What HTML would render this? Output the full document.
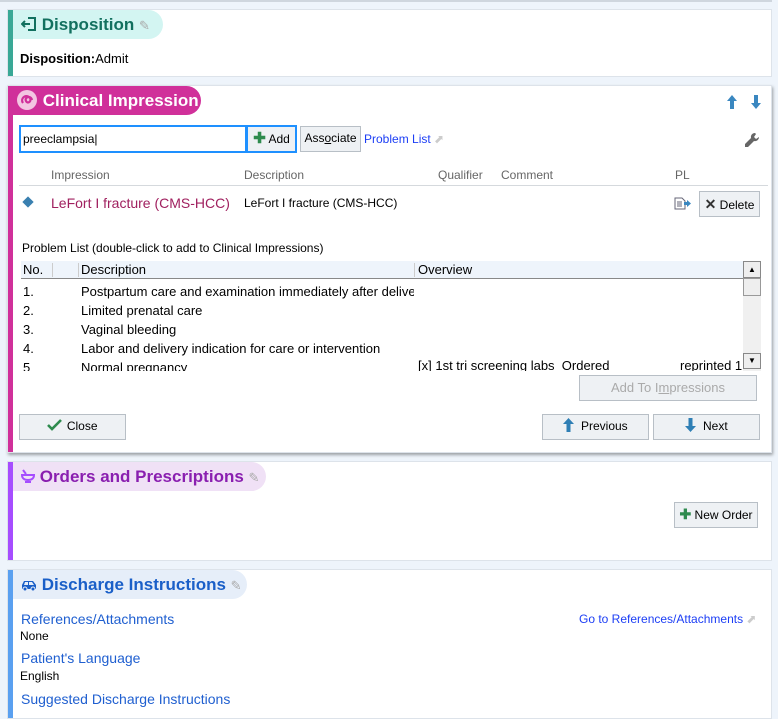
<!DOCTYPE html>
<html><head><meta charset="utf-8"><style>
*{box-sizing:border-box;margin:0;padding:0}
body{width:778px;height:713px;background:#eef4fb;font-family:"Liberation Sans",Arial,sans-serif;font-size:12px;color:#000;position:relative;overflow:hidden}
.a{position:absolute}
.panel{position:absolute;background:#fff;border:1px solid #dde3ea}
.bar{position:absolute;left:0;top:0;bottom:0;width:5px}
.pill{position:absolute;left:5px;top:0;height:29px;border-radius:0 15px 15px 0;font-size:17px;padding-left:8px;line-height:29px;white-space:nowrap;font-weight:bold}
.btn{position:absolute;background:#eef1f4;border:1px solid #b8bfc6;font-size:12px;text-align:center;line-height:23px;color:#000}
.link{color:#1f5fd0;font-size:14px}
.pen{color:#aaa;font-size:13px;font-weight:normal}
svg{display:inline-block}
</style></head><body>
<div class="a" style="left:0;top:0;width:772px;height:2px;background:#cfd6de"></div>

<div class="panel" style="left:7px;top:9px;width:765px;height:68px">
 <div class="bar" style="background:#3aa896"></div>
 <div class="pill" style="background:#d3f5f2;color:#12705f;width:150px">
  <svg width="16" height="16" viewBox="0 0 16 16" style="vertical-align:-2px"><path d="M7 2h7v12H7" fill="none" stroke="#12705f" stroke-width="2"/><path d="M1 8h8M4 5L1 8l3 3" fill="none" stroke="#12705f" stroke-width="2"/></svg>
  Disposition <span class="pen">✎</span></div>
 <div class="a" style="left:12px;top:41px;font-size:13px"><b>Disposition:</b>Admit</div>
</div>

<div class="panel" style="left:7px;top:85px;width:765px;height:368px;box-shadow:1px 2px 3px rgba(0,0,0,.35)">
 <div class="bar" style="background:#d0309a"></div>
 <div class="pill" style="left:0;background:#d0309a;color:#fff;width:193px;top:0;padding-left:8px">
  <svg width="22" height="22" viewBox="0 0 22 22" style="vertical-align:-5px"><circle cx="11" cy="11" r="10" fill="#f3c6e2"/><path d="M7 14c-3-4 2-9 6-6s-1 8-3 4 5-6 6-1" fill="none" stroke="#d0309a" stroke-width="2.2"/></svg>
  Clinical Impression</div>
 <svg class="a" style="left:719px;top:9px" width="34" height="14" viewBox="0 0 34 14"><path d="M5 0L0 6h3v8h4V6h3z" fill="#3a87c0"/><path d="M29 14l5-6h-3V0h-4v8h-3z" fill="#3a87c0"/></svg>
 <svg class="a" style="left:736px;top:46px" width="16" height="16" viewBox="0 0 16 16"><path d="M11 1a4 4 0 0 0-4 5L1 12v3h3l6-6a4 4 0 0 0 5-4l-3 2-2-2 2-3z" fill="#666"/></svg>
 <div class="a" style="left:11px;top:39px;width:228px;height:28px;border:2px solid #1e90ff;background:#fff;padding:5px 2px;font-size:12px">preeclampsia|</div>
 <div class="btn" style="left:239px;top:39px;width:50px;height:28px;border:2px solid #1e90ff;border-left:1px solid #1e90ff;line-height:24px"><b style="color:#2e8b4e;font-size:15px">✚</b> Add</div>
 <div class="btn" style="left:292px;top:40px;width:61px;height:26px">Ass<u>o</u>ciate</div>
 <div class="a" style="left:356px;top:46px;color:#1c3ef5;font-size:12px">Problem List <span style="color:#ccc">⬈</span></div>
 <div class="a" style="left:43px;top:82px;color:#666">Impression</div>
 <div class="a" style="left:236px;top:82px;color:#666">Description</div>
 <div class="a" style="left:430px;top:82px;color:#666">Qualifier</div>
 <div class="a" style="left:493px;top:82px;color:#666">Comment</div>
 <div class="a" style="left:667px;top:82px;color:#666">PL</div>
 <div class="a" style="left:11px;top:99px;width:749px;height:1px;background:#d5d9dd"></div>
 <div class="a" style="left:16px;top:112px;width:8px;height:8px;background:#3a80b0;transform:rotate(45deg)"></div>
 <div class="a" style="left:43px;top:109px;color:#a0205f;font-size:14px">LeFort I fracture (CMS-HCC)</div>
 <div class="a" style="left:236px;top:110px">LeFort I fracture (CMS-HCC)</div>
 <svg class="a" style="left:666px;top:111px" width="17" height="13" viewBox="0 0 17 13"><path d="M1 1h7l3 3v8H1z" fill="#fff" stroke="#667"/><path d="M3 5h5M3 7h5M3 9h5" stroke="#667"/><path d="M10 5h3V3l4 3.5-4 3.5V8h-3z" fill="#3a87c0"/></svg>
 <div class="btn" style="left:691px;top:105px;width:61px;height:26px;line-height:24px"><b style="font-size:14px;color:#333">✕</b> Delete</div>
 <div class="a" style="left:14px;top:155px">Problem List (double-click to add to Clinical Impressions)</div>
 <div class="a" style="left:13px;top:175px;width:740px;height:110px;overflow:hidden;font-size:13px">
  <div class="a" style="left:0;top:0;width:722px;height:18px;background:#eef4fb;border-bottom:1px solid #888"></div>
  <div class="a" style="left:2px;top:1px">No.</div>
  <div class="a" style="left:31px;top:2px;width:1px;height:14px;background:#ccc"></div>
  <div class="a" style="left:57px;top:2px;width:1px;height:14px;background:#ccc"></div>
  <div class="a" style="left:60px;top:1px">Description</div>
  <div class="a" style="left:393px;top:2px;width:1px;height:14px;background:#ccc"></div>
  <div class="a" style="left:397px;top:1px">Overview</div>
  <div class="a" style="left:2px;top:21px;line-height:19px">1.<br>2.<br>3.<br>4.<br>5</div>
  <div class="a" style="left:60px;top:21px;line-height:19px;width:333px;overflow:hidden;white-space:nowrap">Postpartum care and examination immediately after delivery<br>Limited prenatal care<br>Vaginal bleeding<br>Labor and delivery indication for care or intervention<br>Normal pregnancy</div>
  <div class="a" style="left:397px;top:97px;white-space:nowrap">[x] 1st tri screening labs&nbsp; Ordered</div>
  <div class="a" style="left:659px;top:97px;white-space:nowrap">reprinted 1</div>
  <div class="a" style="left:722px;top:0;width:18px;height:110px;background:#f0f0f0"></div>
  <div class="a" style="left:722px;top:0;width:18px;height:17px;background:#eee;border:1px solid #888;font-size:8px;text-align:center;line-height:15px">▲</div>
  <div class="a" style="left:722px;top:17px;width:18px;height:18px;background:#eee;border:1px solid #999"></div>
  <div class="a" style="left:722px;top:92px;width:18px;height:16px;background:#eee;border:1px solid #888;font-size:8px;text-align:center;line-height:14px">▼</div>
 </div>
 <div class="btn" style="left:571px;top:289px;width:178px;height:26px;color:#aaa;font-size:13px">Add To I<u>m</u>pressions</div>
 <div class="btn" style="left:11px;top:328px;width:107px;height:26px"><svg width="16" height="12" viewBox="0 0 16 12" style="vertical-align:-1px"><path d="M1 6l4 4 9-9" fill="none" stroke="#2e8b4e" stroke-width="2.6"/></svg> Close</div>
 <div class="btn" style="left:534px;top:328px;width:107px;height:26px"><svg width="11" height="14" viewBox="0 0 11 14" style="vertical-align:-2px"><path d="M5.5 0L0 6h3.5v8h4V6H11z" fill="#2f7fb5"/></svg> &nbsp;Previous</div>
 <div class="btn" style="left:645px;top:328px;width:107px;height:26px"><svg width="11" height="14" viewBox="0 0 11 14" style="vertical-align:-2px"><path d="M5.5 14L0 8h3.5V0h4v8H11z" fill="#2f7fb5"/></svg> &nbsp;Next</div>
</div>

<div class="panel" style="left:7px;top:461px;width:765px;height:100px">
 <div class="bar" style="background:#a64dff"></div>
 <div class="pill" style="background:#f0e1f6;color:#8a1fb0;width:253px;font-size:17px">
  <svg width="14" height="14" viewBox="0 0 14 14" style="vertical-align:-1px"><path d="M2 1l3 4M1 6h12c0 3-2 5-6 5S1 9 1 6zM4 13h6" fill="none" stroke="#a64dff" stroke-width="2"/></svg>
  Orders and Prescriptions <span class="pen">✎</span></div>
 <div class="btn" style="left:666px;top:40px;width:84px;height:26px"><b style="color:#2e8b4e;font-size:14px">✚</b> New Order</div>
</div>

<div class="panel" style="left:7px;top:569px;width:765px;height:150px">
 <div class="bar" style="background:#5aa0f0"></div>
 <div class="pill" style="background:#e6eef9;color:#1a5fc8;width:234px;font-size:17px">
  <svg width="16" height="12" viewBox="0 0 16 12" style="vertical-align:-1px"><path d="M1 6l2-4h9l3 4v4H1z" fill="#1a5fc8"/><path d="M4 3h3v3H3zM8 3h3l2 3H8z" fill="#e6eef9"/><circle cx="4" cy="10" r="2" fill="#1a5fc8" stroke="#e6eef9"/><circle cx="12" cy="10" r="2" fill="#1a5fc8" stroke="#e6eef9"/></svg>
  Discharge Instructions <span class="pen">✎</span></div>
 <div class="a link" style="left:13px;top:41px">References/Attachments</div>
 <div class="a" style="left:12px;top:59px">None</div>
 <div class="a link" style="left:13px;top:80px">Patient's Language</div>
 <div class="a" style="left:12px;top:99px">English</div>
 <div class="a link" style="left:13px;top:121px">Suggested Discharge Instructions</div>
 <div class="a" style="left:571px;top:42px;color:#1c3ef5">Go to References/Attachments <span style="color:#ccc">⬈</span></div>
</div>
</body></html>
